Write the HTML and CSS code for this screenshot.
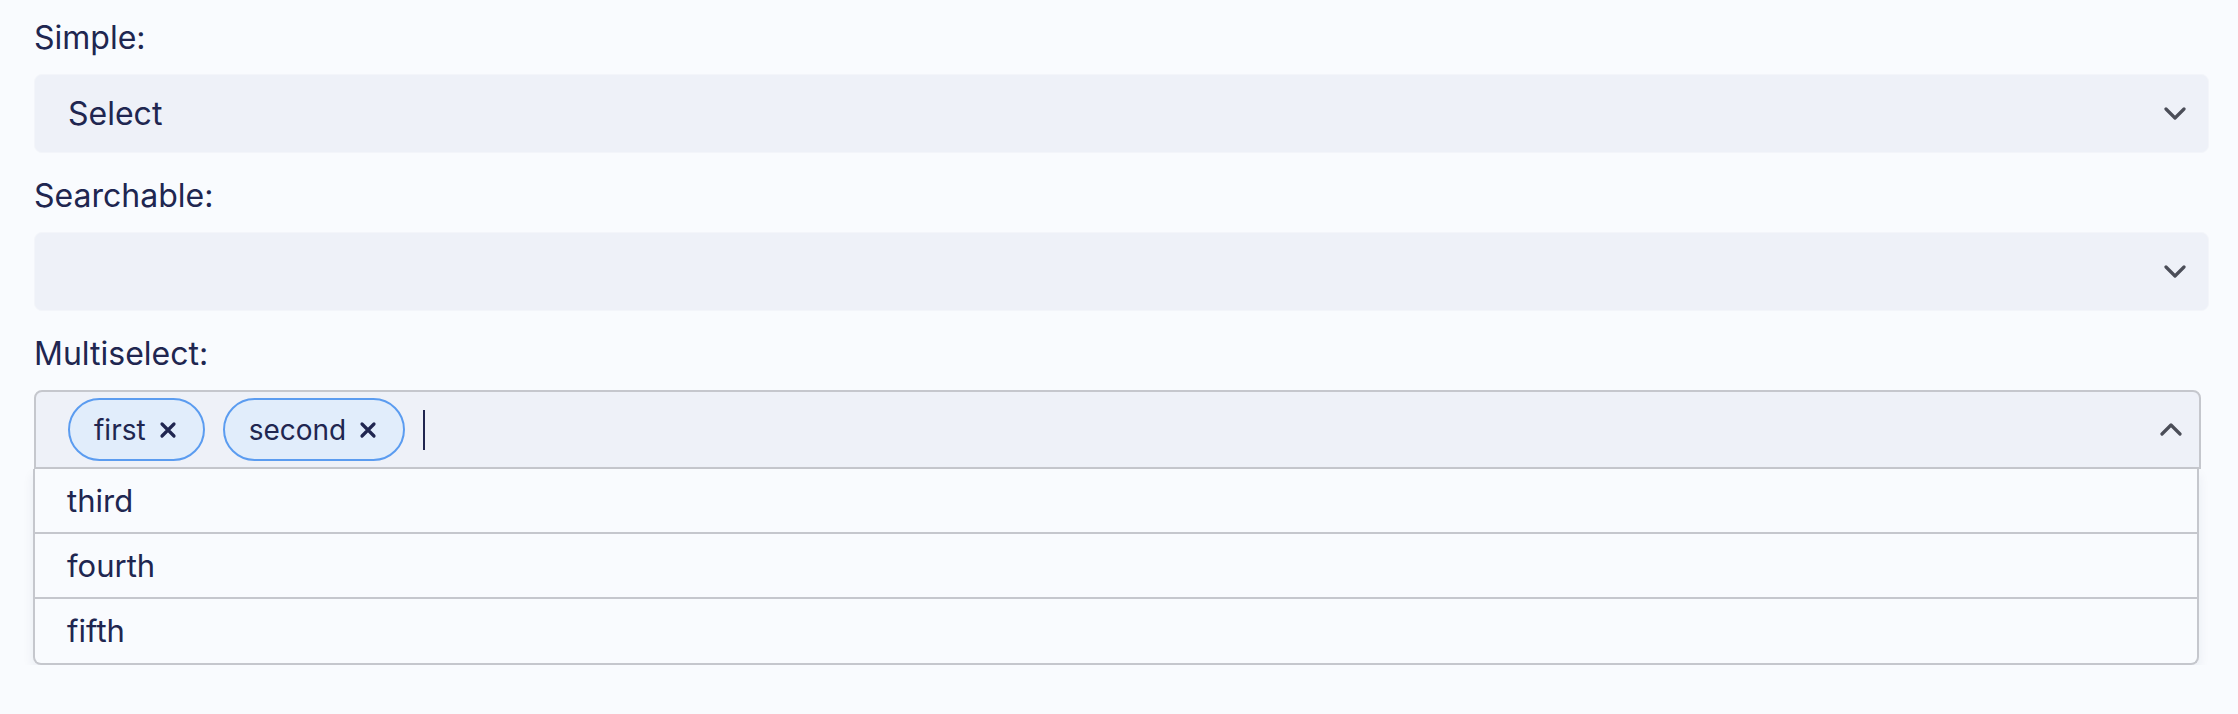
FILE: index.html
```html
<!DOCTYPE html>
<html lang="en">

<head>
    <meta charset="UTF-8">
    <meta name="viewport" content="width=device-width, initial-scale=1.0">
    <title>Select examples</title>
    <link rel="stylesheet" href="styles.css">
</head>

<body>
    <div class="page">
        <label class="field-label">Simple:</label>
        <div class="select">
            <span class="select-value">Select</span>
            <svg class="chevron" viewBox="0 0 22 13"><path d="M2 2l9 9 9-9" /></svg>
        </div>

        <label class="field-label spaced">Searchable:</label>
        <div class="select">
            <input class="select-search" type="text">
            <svg class="chevron" viewBox="0 0 22 13"><path d="M2 2l9 9 9-9" /></svg>
        </div>

        <label class="field-label spaced">Multiselect:</label>
        <div class="multiselect">
            <div class="multiselect-box">
                <span class="tag">first
                    <svg class="tag-remove" viewBox="0 0 18 18"><path d="M3 3l12 12M15 3L3 15" /></svg>
                </span>
                <span class="tag">second
                    <svg class="tag-remove" viewBox="0 0 18 18"><path d="M3 3l12 12M15 3L3 15" /></svg>
                </span>
                <span class="caret"></span>
                <svg class="chevron up" viewBox="0 0 22 13"><path d="M2 11l9-9 9 9" /></svg>
            </div>
            <ul class="options">
                <li>third</li>
                <li>fourth</li>
                <li>fifth</li>
            </ul>
        </div>
    </div>
</body>

</html>
```

FILE: styles.css
```css
body {
    margin: 0;
    background-color: #f9fbfe;
    font-family: Inter, "Noto Sans", sans-serif;
    color: #202650;
}

.page {
    padding: 16px 29px 0 34px;
}

.field-label {
    display: block;
    font-size: 32px;
    line-height: 44px;
    margin-bottom: 14px;
}

.field-label.spaced {
    margin-top: 21px;
}

.select {
    display: flex;
    align-items: center;
    height: 79px;
    box-sizing: border-box;
    padding: 0 22px 0 33px;
    background-color: #eef1f8;
    border: 1px solid #f3f5fa;
    border-radius: 8px;
}

.select-value {
    flex: 1;
    font-size: 32px;
}

.select-search {
    flex: 1;
    border: none;
    background: transparent;
    outline: none;
    font: inherit;
    font-size: 32px;
}

.chevron {
    width: 22px;
    height: 13px;
    fill: none;
    stroke: #4b4e58;
    stroke-width: 3.2;
    stroke-linecap: round;
    stroke-linejoin: round;
}

.multiselect {
    width: calc(100% - 8px);
}

.multiselect-box {
    display: flex;
    align-items: center;
    gap: 18px;
    height: 79px;
    box-sizing: border-box;
    padding: 0 17px 0 32px;
    background-color: #eef1f8;
    border: 2px solid #c5c7cd;
    border-radius: 8px 8px 0 0;
}

.tag {
    display: flex;
    align-items: center;
    gap: 13px;
    height: 63px;
    box-sizing: border-box;
    padding: 0 26px 0 24px;
    background-color: #e1edfb;
    border: 2px solid #5b9cf0;
    border-radius: 32px;
    font-size: 28px;
}

.tag-remove {
    width: 18px;
    height: 18px;
    fill: none;
    stroke: #202650;
    stroke-width: 3.2;
    stroke-linecap: round;
}

.caret {
    width: 2px;
    height: 40px;
    background-color: #202650;
}

.chevron.up {
    margin-left: auto;
}

.options {
    list-style: none;
    margin: 0 2px 0 -1px;
    padding: 0;
    background-color: #f9fbfe;
    border: 2px solid #c5c7cd;
    border-top: none;
    border-radius: 0 0 8px 8px;
    box-shadow: 0 6px 12px rgba(30, 36, 80, 0.07);
}

.options li {
    height: 63px;
    line-height: 63px;
    padding-left: 32px;
    font-size: 31px;
    border-bottom: 2px solid #c5c7cd;
}

.options li:last-child {
    height: 64px;
    border-bottom: none;
}
```
